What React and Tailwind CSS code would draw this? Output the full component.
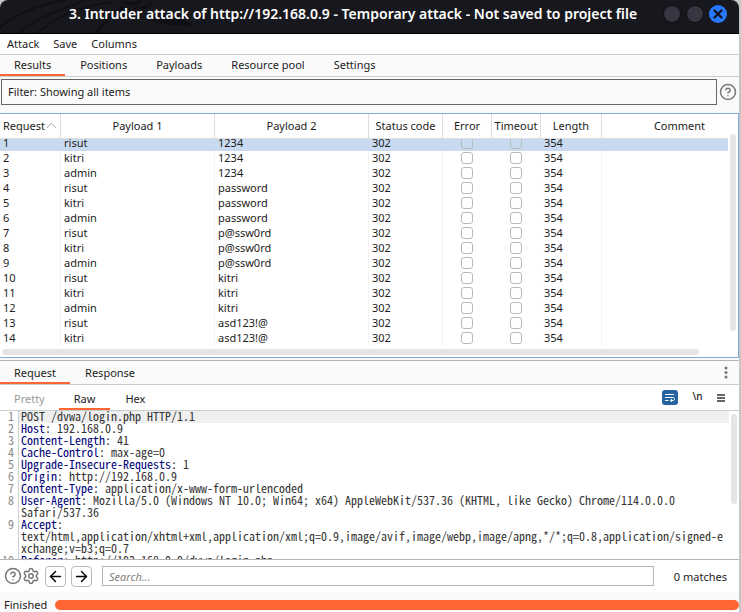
import React, { useState, useEffect, useRef } from "react";
import { ArrowLeft, ArrowRight, CircleHelp, Settings, X } from "lucide-react";

const users = ["risut", "kitri", "admin"];
const passwords = ["1234", "password", "p@ssw0rd", "kitri", "asd123!@"];

const results = Array.from({ length: 14 }, (_, i) => ({
  id: i + 1,
  user: users[i % 3],
  password: passwords[Math.floor(i / 3)],
  status: 302,
  length: 354,
}));

const columns = [
  { name: "Payload 1", width: "w-[154px]" },
  { name: "Payload 2", width: "w-[154px]" },
  { name: "Status code", width: "w-[74px]" },
  { name: "Error", width: "w-[49px]" },
  { name: "Timeout", width: "w-[49px]" },
  { name: "Length", width: "w-[61px]" },
  { name: "Comment", width: "w-[156px]" },
];

const requestLines = [
  { value: ["POST /dvwa/login.php HTTP/1.1"] },
  { header: "Host", value: [" 192.168.0.9"] },
  { header: "Content-Length", value: [" 41"] },
  { header: "Cache-Control", value: [" max-age=0"] },
  { header: "Upgrade-Insecure-Requests", value: [" 1"] },
  { header: "Origin", value: [" http://192.168.0.9"] },
  { header: "Content-Type", value: [" application/x-www-form-urlencoded"] },
  {
    header: "User-Agent",
    value: [
      " Mozilla/5.0 (Windows NT 10.0; Win64; x64) AppleWebKit/537.36 (KHTML, like Gecko) Chrome/114.0.0.0",
      "Safari/537.36",
    ],
  },
  {
    header: "Accept",
    value: [
      "",
      "text/html,application/xhtml+xml,application/xml;q=0.9,image/avif,image/webp,image/apng,*/*;q=0.8,application/signed-e",
      "xchange;v=b3;q=0.7",
    ],
  },
  { header: "Referer", value: [" http://192.168.0.9/dvwa/login.php"] },
];

function TitleBar() {
  return (
    <header className="relative flex h-[34px] items-center justify-end overflow-hidden rounded-t-lg border-b border-black bg-[#17181d] pr-3">
      <svg className="absolute left-0 top-0" width="200" height="34" fill="none" stroke="#0f1014">
        <path d="M0 28 C14 14 40 4 66 0 M18 34 C34 18 62 10 84 0 M36 34 C56 16 84 6 112 2" strokeWidth="2" />
        <path d="M96 34 C104 22 112 14 124 6 M124 2 C130 6 136 4 142 0 M134 8 C140 10 146 8 152 3" strokeWidth="3" />
        <path d="M150 14 C166 14 184 18 194 27 C178 23 168 27 154 21 Z" fill="#0f1014" />
      </svg>
      <h1 className="absolute inset-x-0 pb-[6px] pl-[69px] text-[14px] leading-5 font-semibold whitespace-nowrap text-white">
        3. Intruder attack of http://192.168.0.9 - Temporary attack - Not saved to project file
      </h1>
      <div className="relative flex gap-[5px] pb-[5px]">
        <button aria-label="Minimize" className="h-[18px] w-[18px] rounded-full border border-[#0d0e12] bg-[#353642]" />
        <button aria-label="Maximize" className="h-[18px] w-[18px] rounded-full border border-[#0d0e12] bg-[#353642]" />
        <button aria-label="Close" className="flex h-[18px] w-[18px] items-center justify-center rounded-full bg-[#2777ff] text-[#10131c]">
          <X size={14} strokeWidth={4} />
        </button>
      </div>
    </header>
  );
}

function Tab({ label, active, disabled, onClick, className }) {
  return (
    <button
      onClick={onClick}
      disabled={disabled}
      className={`border-b-2 ${active ? "border-[#ff6633]" : "border-transparent"} ${disabled ? "text-[#9a9a9a]" : ""} ${className}`}
    >
      {label}
    </button>
  );
}

function ResultsTable() {
  const pane = useRef(null);
  const [selected, setSelected] = useState(1);

  useEffect(() => {
    pane.current.scrollTop = 3;
  }, []);

  return (
    <section className="flex h-[245px] flex-col border-y border-r border-[#84aadb] bg-white">
      <div className="flex">
        <div ref={pane} className="h-[233px] min-w-0 flex-1 overflow-hidden">
          <table className="w-[758px] table-fixed border-separate border-spacing-0">
            <thead className="sticky top-0 z-10 bg-white">
              <tr className="h-[25px]">
                <th className="w-[61px] border-r border-b border-[#dedede] pb-[2px] pl-[3px] text-left font-normal">
                  <span className="flex items-center gap-px">
                    Request
                    <svg width="11" height="7" viewBox="0 0 11 7" fill="none" stroke="#a9a9a9">
                      <path d="M1 6 L5.5 1 L10 6" />
                    </svg>
                  </span>
                </th>
                {columns.map((col) => (
                  <th key={col.name} className={`${col.width} border-r border-b border-[#dedede] pb-[2px] font-normal whitespace-nowrap`}>
                    {col.name}
                  </th>
                ))}
              </tr>
            </thead>
            <tbody className="leading-[13px] [&_td]:align-top">
              {results.map((row) => (
                <tr
                  key={row.id}
                  onClick={() => setSelected(row.id)}
                  className={`h-[15px] ${row.id === selected ? "bg-[#c9daf0] [&>td]:border-[#c9daf0]" : ""}`}
                >
                  <td className="border-r border-[#f3f3f3] pl-[3px]">{row.id}</td>
                  <td className="border-r border-[#f3f3f3] pl-[3px]">{row.user}</td>
                  <td className="border-r border-[#f3f3f3] pl-[3px]">{row.password}</td>
                  <td className="border-r border-[#f3f3f3] pl-[3px]">{row.status}</td>
                  <td className="pt-px pr-px">
                    <input type="checkbox" aria-label={`Error ${row.id}`} className="mx-auto block h-3 w-3 appearance-none rounded-[3px] border border-[#b9b9b9]" />
                  </td>
                  <td className="pt-px pr-px">
                    <input type="checkbox" aria-label={`Timeout ${row.id}`} className="mx-auto block h-3 w-3 appearance-none rounded-[3px] border border-[#b9b9b9]" />
                  </td>
                  <td className="border-r border-[#f3f3f3] pl-[3px]">{row.length}</td>
                  <td></td>
                </tr>
              ))}
            </tbody>
          </table>
          <div className="h-1" />
        </div>
        <div className="w-[10px] px-[2px] pt-5">
          <div className="h-[197px] w-[6px] rounded-full bg-[#e5e5e5]" />
        </div>
      </div>
      <div className="pt-[2px] pr-[39px] pl-[2px]">
        <div className="h-[6px] rounded-full bg-[#e5e5e5]" />
      </div>
    </section>
  );
}

function RequestEditor() {
  return (
    <div className="relative h-[149px] overflow-hidden border-b border-[#b5b5b5] bg-white font-['Noto_Sans_Mono_CJK_JP','Noto_Sans_CJK_JP',monospace] text-[12px] leading-[10px] text-[#333333] [font-feature-settings:'hwid']">
      {requestLines.map((line, i) => (
        <div key={i} className="flex pr-[10px]">
          <span className="w-[19px] shrink-0 border-r border-[#d0d0d0] pr-1 text-right text-[#8a8a8a]">{i + 1}</span>
          <code className={`flex-1 pl-[2px] whitespace-pre [font-family:inherit] ${i === 0 ? "bg-[#efefef]" : ""}`}>
            {line.value.map((text, n) => (
              <span key={n} className="block h-3">
                {n === 0 && line.header && (
                  <>
                    <span className="text-[#00007a]">{line.header}</span>:
                  </>
                )}
                {text}
              </span>
            ))}
          </code>
        </div>
      ))}
      <div className="absolute top-[3px] right-[2px] h-[90px] w-[6px] rounded-full bg-[#e5e5e5]" />
    </div>
  );
}

function App() {
  const [page, setPage] = useState("Results");
  const [message, setMessage] = useState("Request");
  const [view, setView] = useState("Raw");

  return (
    <div className="min-h-screen bg-[#c6c6c6] pr-[2px] font-['Noto_Sans',sans-serif] text-[11px] leading-[15px] text-[#1c1c1c]">
      <TitleBar />

      <nav className="flex h-[21px] items-center gap-[14px] border-b border-[#cccccc] bg-white pb-[2px] pl-[7px]">
        <button>Attack</button>
        <button>Save</button>
        <button>Columns</button>
      </nav>

      <div className="flex h-[22px] gap-px border-b border-[#c9cfcc] bg-[#fafafa]">
        {["Results", "Positions", "Payloads", "Resource pool", "Settings"].map((name) => (
          <Tab key={name} label={name} active={page === name} onClick={() => setPage(name)} className="px-[14px]" />
        ))}
      </div>

      <div className="flex h-9 items-start gap-[2px] bg-[#fafafa] pt-[2px] pr-[2px] pl-px">
        <button className="h-[26px] flex-1 border border-[#666666] px-[6px] pb-[2px] text-left">Filter: Showing all items</button>
        <button aria-label="Help" className="mt-1 text-[#777777]">
          <CircleHelp size={18} strokeWidth={2} />
        </button>
      </div>

      <ResultsTable />

      <div className="h-[3px] border-b border-[#b8b0b4] bg-[#fafafa]" />

      <div className="flex h-6 items-stretch gap-px border-b border-[#c9cfcc] bg-[#fafafa] pr-[11px]">
        {["Request", "Response"].map((name) => (
          <Tab key={name} label={name} active={message === name} onClick={() => setMessage(name)} className="px-[14px] pt-[2px]" />
        ))}
        <button aria-label="More" className="ml-auto">
          <svg width="4" height="13" viewBox="0 0 4 13" fill="#777777">
            <circle cx="2" cy="2" r="1.5" />
            <circle cx="2" cy="6.5" r="1.5" />
            <circle cx="2" cy="11" r="1.5" />
          </svg>
        </button>
      </div>

      <div className="flex h-[26px] items-stretch border-b border-[#c9cfcc] bg-white pr-[14px]">
        <Tab label="Pretty" disabled className="px-[14px] pt-[3px]" />
        {["Raw", "Hex"].map((name) => (
          <Tab key={name} label={name} active={view === name} onClick={() => setView(name)} className="px-[15px] pt-[3px]" />
        ))}
        <div className="ml-auto flex items-center gap-[14px]">
          <button aria-label="Word wrap" className="flex h-[15px] w-4 items-center justify-center rounded-[3px] bg-[#2563a0]">
            <svg width="10" height="9" viewBox="0 0 10 9" fill="none" stroke="#ffffff">
              <path d="M0 1.5 H9 M0 4.5 H8 C10 4.5 10 7.5 8 7.5 H5.5 M0 7.5 H3.5 M7 6 L5.5 7.5 L7 9" />
            </svg>
          </button>
          <button className="w-[11px] pb-[2px] text-[10px] font-medium">\n</button>
          <button aria-label="Menu">
            <svg width="8" height="8" viewBox="0 0 8 8" fill="#666666">
              <path d="M0 0H8V2H0Z M0 3H8V5H0Z M0 6H8V8H0Z" />
            </svg>
          </button>
        </div>
      </div>

      <RequestEditor />

      <div className="flex h-8 items-center bg-white pr-[12px] pl-1">
        <button aria-label="Help" className="text-[#777777]">
          <CircleHelp size={18} strokeWidth={2} />
        </button>
        <button aria-label="Settings" className="text-[#777777]">
          <Settings size={18} strokeWidth={2} />
        </button>
        <button aria-label="Previous match" className="ml-[5px] flex h-[21px] w-[21px] items-center justify-center rounded border border-[#b9b9b9] text-black">
          <ArrowLeft size={17} strokeWidth={2} />
        </button>
        <button aria-label="Next match" className="ml-[5px] flex h-[21px] w-[21px] items-center justify-center rounded border border-[#b9b9b9] text-black">
          <ArrowRight size={17} strokeWidth={2} />
        </button>
        <input
          type="text"
          aria-label="Search"
          placeholder="Search..."
          className="ml-[10px] h-5 min-w-0 flex-1 border border-[#b5b5b5] px-[6px] outline-none placeholder:text-[#808080] placeholder:italic"
        />
        <span className="w-[73px] text-right">0 matches</span>
      </div>

      <footer className="flex h-[21px] items-center gap-2 bg-[#fafafa] pt-[5px] pb-px pl-1">
        <span className="pb-px">Finished</span>
        <div className="h-[10px] flex-1 rounded-full bg-[#ff6633]" />
      </footer>
    </div>
  );
}

export default App;
